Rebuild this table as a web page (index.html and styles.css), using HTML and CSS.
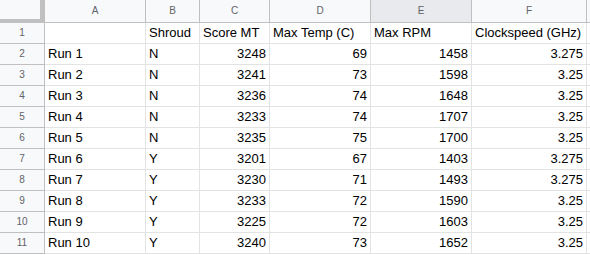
FILE: index.html
```html
<!DOCTYPE html>
<html>
<head>
<meta charset="utf-8">
<link rel="stylesheet" href="styles.css">
</head>
<body>
<div class="sheet">
  <div class="corner"></div>
  <div class="ch">A</div><div class="ch">B</div><div class="ch">C</div><div class="ch">D</div><div class="ch sel">E</div><div class="ch">F</div><div class="ch last"></div>

  <div class="rh">1</div><div class="c"></div><div class="c">Shroud</div><div class="c">Score MT</div><div class="c">Max Temp (C)</div><div class="c">Max RPM</div><div class="c">Clockspeed (GHz)</div><div class="c last"></div>

  <div class="rh">2</div><div class="c">Run 1</div><div class="c">N</div><div class="c n">3248</div><div class="c n">69</div><div class="c n">1458</div><div class="c n">3.275</div><div class="c last"></div>
  <div class="rh">3</div><div class="c">Run 2</div><div class="c">N</div><div class="c n">3241</div><div class="c n">73</div><div class="c n">1598</div><div class="c n">3.25</div><div class="c last"></div>
  <div class="rh">4</div><div class="c">Run 3</div><div class="c">N</div><div class="c n">3236</div><div class="c n">74</div><div class="c n">1648</div><div class="c n">3.25</div><div class="c last"></div>
  <div class="rh">5</div><div class="c">Run 4</div><div class="c">N</div><div class="c n">3233</div><div class="c n">74</div><div class="c n">1707</div><div class="c n">3.25</div><div class="c last"></div>
  <div class="rh">6</div><div class="c">Run 5</div><div class="c">N</div><div class="c n">3235</div><div class="c n">75</div><div class="c n">1700</div><div class="c n">3.25</div><div class="c last"></div>
  <div class="rh">7</div><div class="c">Run 6</div><div class="c">Y</div><div class="c n">3201</div><div class="c n">67</div><div class="c n">1403</div><div class="c n">3.275</div><div class="c last"></div>
  <div class="rh">8</div><div class="c">Run 7</div><div class="c">Y</div><div class="c n">3230</div><div class="c n">71</div><div class="c n">1493</div><div class="c n">3.275</div><div class="c last"></div>
  <div class="rh">9</div><div class="c">Run 8</div><div class="c">Y</div><div class="c n">3233</div><div class="c n">72</div><div class="c n">1590</div><div class="c n">3.25</div><div class="c last"></div>
  <div class="rh">10</div><div class="c">Run 9</div><div class="c">Y</div><div class="c n">3225</div><div class="c n">72</div><div class="c n">1603</div><div class="c n">3.25</div><div class="c last"></div>
  <div class="rh">11</div><div class="c">Run 10</div><div class="c">Y</div><div class="c n">3240</div><div class="c n">73</div><div class="c n">1652</div><div class="c n">3.25</div><div class="c last"></div>
</div>
</body>
</html>
```
FILE: styles.css
```css
* { box-sizing: border-box; }
html, body { margin: 0; padding: 0; background: #ffffff; }
.sheet {
  display: grid;
  grid-template-columns: 45px 101px 54px 70px 101px 101px 115px 1fr;
  grid-template-rows: 23px repeat(11, 21px);
  width: 590px;
  font-family: "Liberation Sans", Arial, sans-serif;
}
.corner {
  background: #f8f9fa;
  border-right: 1px solid #c0c0c0;
  box-shadow: inset -4px -4px 0 #c0c0c0;
}
.ch {
  background: #f8f9fa;
  border-right: 1px solid #c0c0c0;
  border-bottom: 1px solid #c0c0c0;
  color: #5f6368;
  font-size: 10px;
  line-height: 22px;
  text-align: center;
}
.ch.sel { background: #e8eaed; }
.ch.last { border-right: none; }
.rh {
  background: #f8f9fa;
  border-right: 1px solid #c0c0c0;
  border-bottom: 1px solid #c0c0c0;
  color: #5f6368;
  font-size: 10px;
  line-height: 20px;
  text-align: center;
}
.c {
  border-right: 1px solid #e2e3e3;
  border-bottom: 1px solid #e2e3e3;
  color: #000000;
  font-size: 13px;
  line-height: 20px;
  padding: 0 3px;
  white-space: nowrap;
  overflow: hidden;
}
.c.n { text-align: right; }
.c.last { border-right: none; }
```
